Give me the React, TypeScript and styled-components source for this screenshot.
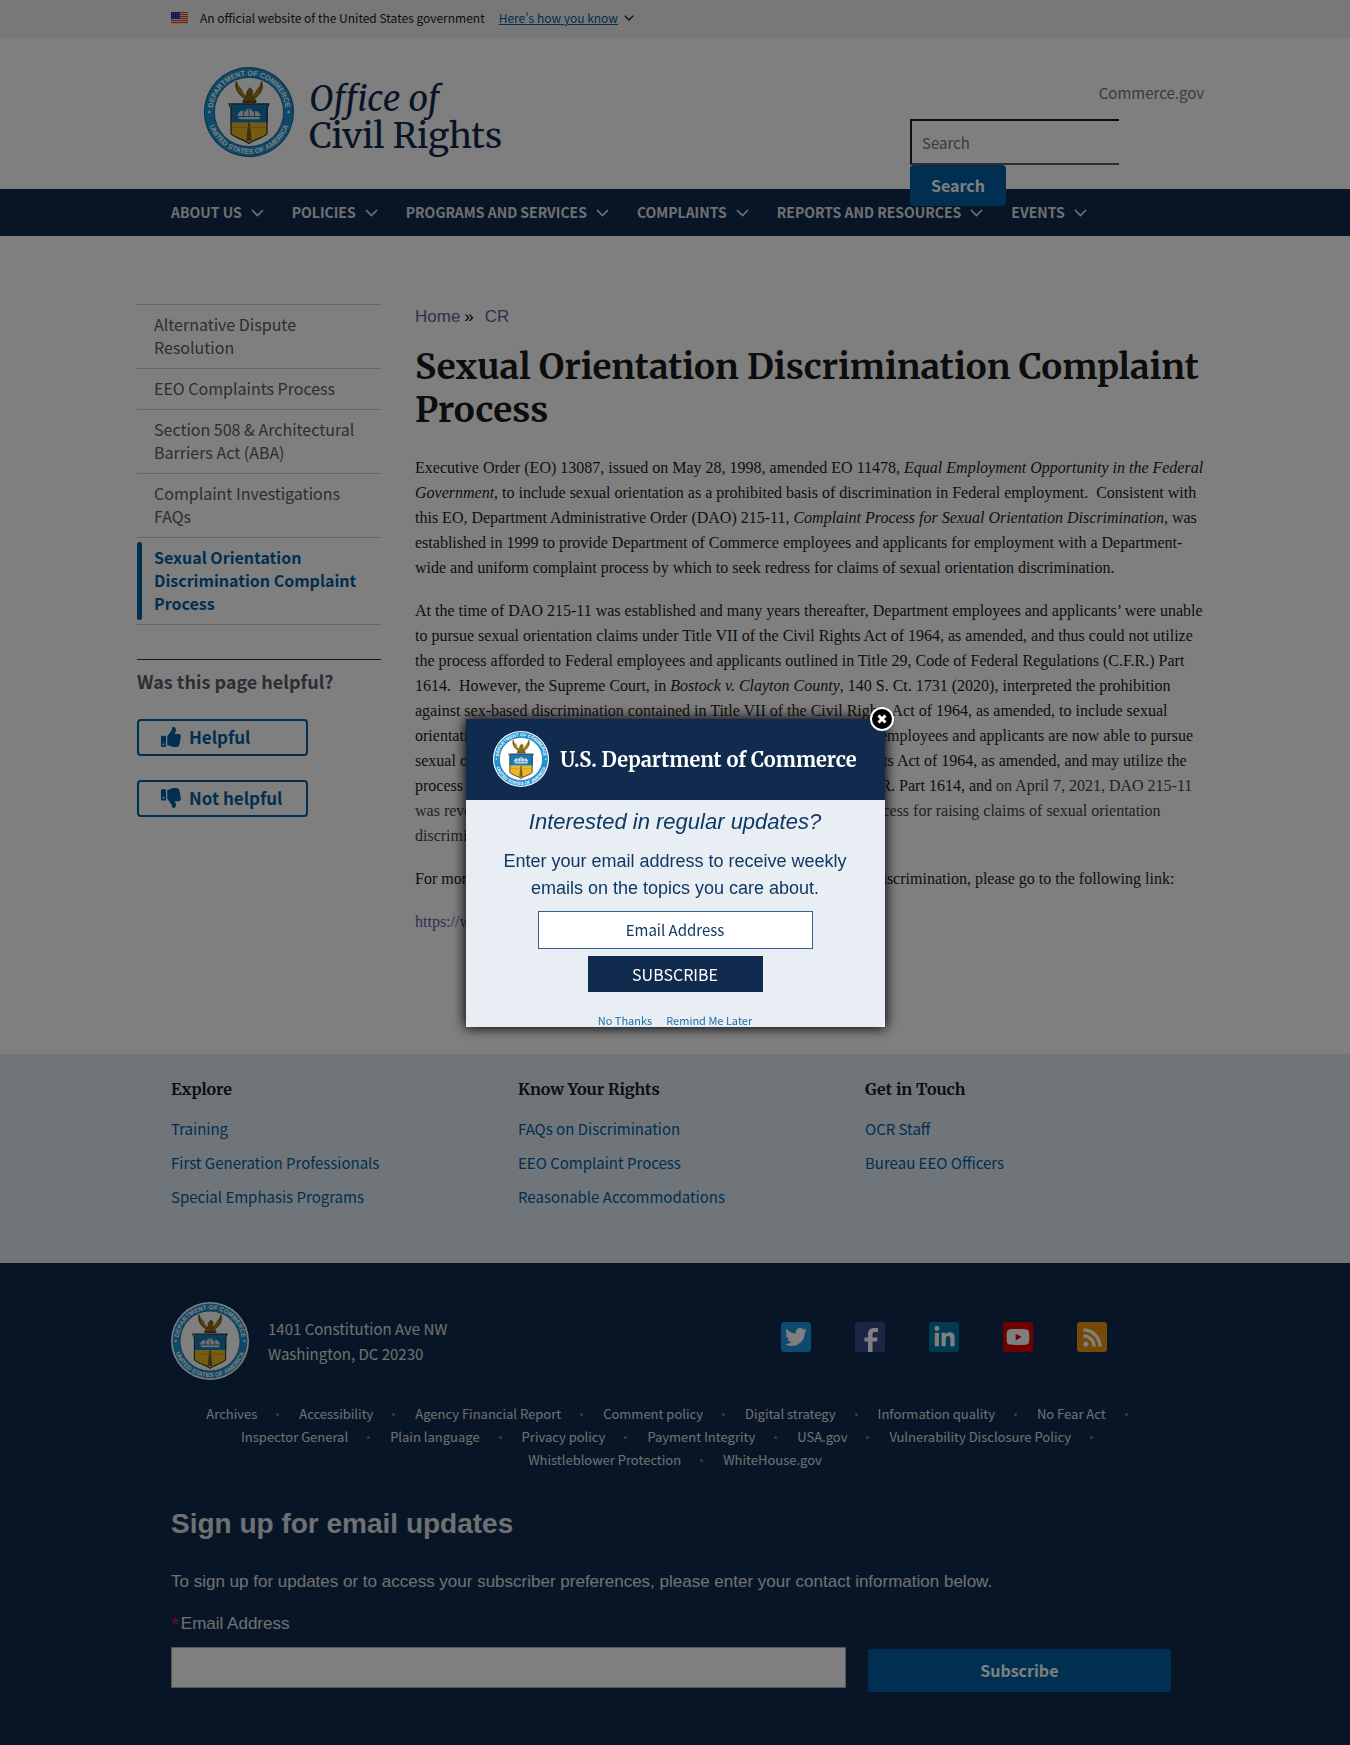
import React from "react";
import styled, { createGlobalStyle } from "styled-components";
import {
  FaThumbsUp,
  FaThumbsDown,
  FaTwitter,
  FaFacebookF,
  FaLinkedinIn,
  FaYoutube,
  FaRss,
} from "react-icons/fa";

const sans = `"Source Sans Pro", "Noto Sans CJK SC", sans-serif`;
const heading = `"Merriweather", "DejaVu Serif Condensed", "DejaVu Serif", serif`;
const arial = `"Liberation Sans", Arial, sans-serif`;
const times = `"Liberation Serif", "Times New Roman", serif`;

const color = {
  navy: "#112b4e",
  blue: "#005ea2",
  ink: "#1b1b1b",
  muted: "#71767a",
  line: "#c9cccf",
  visited: "#6a5a9c",
};

const GlobalStyle = createGlobalStyle`
  *, *::before, *::after { box-sizing: border-box; }
  body { margin: 0; background: #fff; color: ${color.ink}; font-family: ${sans}; }
  a { color: inherit; text-decoration: none; }
  ul { list-style: none; margin: 0; padding: 0; }
  h1, h2, h3, p { margin: 0; }
  button, input { font: inherit; margin: 0; }
`;

const Container = styled.div`
  width: 100%;
  max-width: 1008px;
  margin: 0 auto;
`;

const WideContainer = styled.div`
  width: 100%;
  max-width: 1076px;
  margin: 0 auto;
  padding-right: 9px;
`;

/* ---------- government banner ---------- */

const Banner = styled.div`
  background: #f0f0f0;
  font-size: 12px;
  line-height: 18px;
  padding: 9px 0 11px;
`;

const BannerRow = styled(Container)`
  display: flex;
  align-items: center;

  svg:first-child {
    margin-right: 12px;
  }
`;

const BannerToggle = styled.button`
  display: flex;
  align-items: center;
  gap: 6px;
  margin-left: 14px;
  padding: 0;
  border: 0;
  background: none;
  color: ${color.blue};
  line-height: 18px;

  span {
    text-decoration: underline;
    font-variant-east-asian: proportional-width;
  }

  svg {
    color: ${color.ink};
  }
`;

/* ---------- header ---------- */

const HeaderRow = styled(WideContainer)`
  display: flex;
  justify-content: space-between;
  align-items: flex-start;
  padding-left: 67px;
`;

const Brand = styled.a`
  display: flex;
  align-items: center;
  gap: 15px;
  padding: 29px 0 32px;
`;

const BrandName = styled.span`
  display: flex;
  flex-direction: column;
  padding-top: 12px;
  font-family: ${heading};
  font-size: 35px;
  line-height: 37px;
  color: ${color.navy};
`;

const HeaderTools = styled.div`
  display: flex;
  flex-direction: column;
  align-items: flex-end;
  width: 294px;
  padding-top: 44px;
`;

const SecondaryLink = styled.a`
  font-size: 15px;
  line-height: 22px;
  color: ${color.muted};
`;

const SearchForm = styled.form`
  display: flex;
  flex-direction: column;
  align-items: flex-start;
  align-self: stretch;
  margin: 15px 0 -20px;
`;

const SearchInput = styled.input`
  width: 209px;
  height: 46px;
  padding: 0 10px;
  border: 2px solid ${color.ink};
  border-right: 0;
  border-bottom-color: #565c65;
  border-radius: 0;
  background: #fff;
  font-size: 15px;

  &::placeholder {
    color: #757575;
    opacity: 1;
  }
`;

const PrimaryButton = styled.button`
  border: 0;
  border-radius: 4px;
  background: ${color.blue};
  color: #fff;
  font-weight: 700;
  font-size: 16px;
  line-height: 41px;
`;

const SearchButton = styled(PrimaryButton)`
  position: relative;
  z-index: 1;
  padding: 0 21px;
`;

/* ---------- main menu ---------- */

const Nav = styled.nav`
  background: ${color.navy};
`;

const NavList = styled.ul`
  display: flex;
  flex-wrap: wrap;
  gap: 0 28px;
  width: 100%;
  max-width: 1008px;
  margin: 0 auto;
`;

const NavButton = styled.button`
  display: flex;
  align-items: center;
  gap: 9px;
  padding: 0;
  border: 0;
  background: none;
  color: #dfe1e2;
  font-weight: 700;
  font-size: 14px;
  line-height: 47px;
  text-transform: uppercase;
`;

/* ---------- page body ---------- */

const Main = styled(WideContainer)`
  display: grid;
  grid-template-columns: 244px minmax(0, 1fr);
  gap: 34px;
  padding-top: 68px;
  padding-bottom: 120px;
`;

const SideList = styled.ul`
  border-bottom: 1px solid ${color.line};
`;

const SideItem = styled.li`
  border-top: 1px solid ${color.line};
`;

const SideLink = styled.a<{ $current?: boolean }>`
  position: relative;
  display: block;
  padding: 8px 17px 9px;
  font-size: 16px;
  line-height: 23px;
  font-weight: ${(p) => (p.$current ? 700 : 400)};
  color: ${(p) => (p.$current ? color.blue : "#565c65")};

  &::before {
    content: "";
    display: ${(p) => (p.$current ? "block" : "none")};
    position: absolute;
    left: 0;
    top: 4px;
    bottom: 4px;
    width: 5px;
    border-radius: 99px;
    background: ${color.blue};
  }
`;

const Feedback = styled.section`
  display: flex;
  flex-direction: column;
  align-items: flex-start;
  gap: 24px;
  margin-top: 34px;
  padding-top: 10px;
  border-top: 1px solid #333;
`;

const FeedbackTitle = styled.h2`
  padding-bottom: 2px;
  font-size: 18px;
  line-height: 23px;
  color: #565c65;
`;

const FeedbackButton = styled.button`
  display: flex;
  align-items: center;
  gap: 8px;
  width: 171px;
  height: 37px;
  padding: 0 22px 2px;
  border: 2px solid ${color.blue};
  border-radius: 4px;
  background: transparent;
  color: ${color.blue};
  font-weight: 700;
  font-size: 17px;
  line-height: 31px;
`;

const Breadcrumb = styled.ol`
  display: flex;
  list-style: none;
  margin: 0;
  padding: 0;
  font-family: ${arial};
  font-size: 17px;
  line-height: 25px;

  a {
    color: ${color.visited};
  }

  li + li::before {
    content: "»";
    margin: 0 11px 0 4px;
    color: #000;
  }
`;

const Title = styled.h1`
  margin: 17px 0 23px;
  font-family: ${heading};
  font-size: 35px;
  line-height: 43px;
  color: ${color.ink};
`;

const Prose = styled.div`
  display: flex;
  flex-direction: column;
  gap: 18px;
  font-family: ${times};
  font-size: 16px;
  line-height: 25px;
  color: ${color.ink};
`;

const Soft = styled.span`
  color: #444;
`;

const ProseLink = styled.a`
  color: ${color.visited};
`;

/* ---------- footer ---------- */

const LinkBand = styled.section`
  background: #e1eaf4;
  padding: 24px 0 49px;
`;

const Columns = styled(Container)`
  display: grid;
  grid-template-columns: repeat(2, 347px) 1fr;
`;

const ColumnTitle = styled.h3`
  margin-bottom: 12px;
  font-family: ${heading};
  font-size: 16px;
  line-height: 22px;
`;

const ColumnLink = styled.a`
  display: block;
  font-size: 15px;
  line-height: 34px;
  color: ${color.blue};
`;

const DarkFooter = styled.footer`
  background: ${color.navy};
  color: #dfe1e2;
  padding: 39px 0 54px;
`;

const ContactRow = styled(Container)`
  display: flex;
  align-items: center;
  gap: 19px;
`;

const Address = styled.address`
  flex: 1;
  font-style: normal;
  font-size: 15px;
  line-height: 25px;
`;

const SocialList = styled.ul`
  display: flex;
  gap: 44px;
  padding: 0 72px 8px 0;
`;

const SocialLink = styled.a<{ $bg: string }>`
  display: flex;
  align-items: center;
  justify-content: center;
  width: 30px;
  height: 30px;
  border-radius: 3px;
  background: ${(p) => p.$bg};
  color: #fff;
`;

const PolicyList = styled.ul`
  display: flex;
  flex-wrap: wrap;
  justify-content: center;
  column-gap: 4px;
  width: 100%;
  max-width: 1008px;
  margin: 22px auto 0;
  font-size: 13px;
  line-height: 23px;

  li {
    display: flex;
    align-items: center;
  }

  li:not(:last-child)::after {
    content: "";
    width: 3px;
    height: 3px;
    margin: 2px 16px 0 19px;
    border-radius: 50%;
    background: #5b7f95;
  }
`;

const SignUp = styled(Container)`
  margin-top: 36px;
  font-family: ${arial};
  font-size: 17px;
  line-height: 24px;
`;

const SignUpTitle = styled.h2`
  margin-bottom: 29px;
  font-size: 28px;
  line-height: 34px;
`;

const EmailLabel = styled.label`
  display: flex;
  gap: 2px;
  margin: 18px 0 11px;

  span {
    font-size: 20px;
    color: #e0104a;
  }
`;

const SignUpRow = styled.form`
  display: grid;
  grid-template-columns: minmax(0, 674fr) minmax(0, 303fr);
  gap: 22px;
  align-items: start;
  padding-right: 8px;
`;

const EmailInput = styled.input`
  width: 100%;
  height: 41px;
  padding: 0 8px;
  border: 1px solid #a9aeb1;
  background: #fff;
`;

const SubscribeButton = styled(PrimaryButton)`
  margin-top: 2px;
  border-radius: 2px;
  font-family: ${sans};
`;

/* ---------- dialog ---------- */

const Backdrop = styled.div`
  position: fixed;
  inset: 0;
  z-index: 10;
  display: flex;
  align-items: center;
  justify-content: center;
  background: rgba(0, 0, 0, 0.5);
`;

const Dialog = styled.div`
  position: relative;
  width: 419px;
  max-width: 100%;
  background: #e9eef5;
  color: ${color.navy};
  box-shadow: 0 0 12px 1px #000;
`;

const DialogHeader = styled.header`
  display: flex;
  align-items: center;
  justify-content: center;
  gap: 11px;
  height: 81px;
  background: ${color.navy};
  color: #fff;
  font-family: ${heading};
  font-weight: 700;
  font-size: 20px;
  white-space: nowrap;
`;

const CloseButton = styled.button`
  position: absolute;
  top: -12px;
  right: -9px;
  display: flex;
  padding: 0;
  border: 0;
  border-radius: 50%;
  background: none;
`;

const DialogBody = styled.form`
  display: flex;
  flex-direction: column;
  align-items: center;
  padding-top: 8px;
  text-align: center;
  font-family: ${arial};
`;

const DialogTitle = styled.h2`
  font-size: 22px;
  font-style: italic;
  font-weight: 400;
  line-height: 27px;
  color: #0f3864;
`;

const DialogText = styled.p`
  width: 360px;
  margin: 13px 0 9px;
  font-size: 18px;
  line-height: 27px;
  color: #0f3864;
`;

const DialogInput = styled.input`
  width: 275px;
  height: 38px;
  border: 1px solid #33608f;
  background: #fff;
  font-family: ${sans};
  font-size: 15px;
  text-align: center;

  &::placeholder {
    color: #0f3864;
    opacity: 1;
  }
`;

const DialogSubmit = styled.button`
  width: 175px;
  height: 36px;
  margin: 7px 0 21px;
  padding: 0;
  border: 0;
  background: ${color.navy};
  color: #fff;
  font-family: ${sans};
  font-size: 16px;
`;

const DialogLinks = styled.div`
  display: flex;
  gap: 14px;
  font-family: ${sans};
  font-size: 11px;
  line-height: 14px;
  color: #1f6ea5;
`;

/* ---------- drawings ---------- */

function Seal({ size, id, ring }: { size: number; id: string; ring?: boolean }) {
  return (
    <svg width={size} height={size} viewBox="0 0 100 100" role="img" aria-label="Department of Commerce seal">
      <defs>
        <path id={`${id}-top`} d="M 9.5 50 A 40.5 40.5 0 0 1 90.5 50" />
        <path id={`${id}-bottom`} d="M 3.5 50 A 46.5 46.5 0 0 0 96.5 50" />
      </defs>
      <circle cx="50" cy="50" r="50" fill={ring ? "#fff" : "#0a5f95"} />
      <circle cx="50" cy="50" r={ring ? 48 : 49} fill="#1e93d2" />
      <circle cx="50" cy="50" r="38.5" fill="#fff" stroke="#0a5f95" strokeWidth="1" />
      <g fill="#fff" fontFamily="Liberation Sans, Arial, sans-serif" fontSize="8" fontWeight="700" textAnchor="middle">
        <text>
          <textPath href={`#${id}-top`} startOffset="50%">DEPARTMENT OF COMMERCE</textPath>
        </text>
        <text>
          <textPath href={`#${id}-bottom`} startOffset="50%">UNITED STATES OF AMERICA</textPath>
        </text>
      </g>
      <circle cx="6" cy="50" r="1.4" fill="#fff" />
      <circle cx="94" cy="50" r="1.4" fill="#fff" />
      {/* eagle */}
      <path
        d="M36 16 C37 20 39 22 41 24 L43 29 L47 33 L48 27 L51 23 L54 26 L53 33 L57 29 L60 24 C62 22 63 19 64 16 C67 24 62 31 56 35 L58 38 L43 38 L45 35 C39 31 33 24 36 16 Z"
        fill="#8d6a14"
        stroke="#4a3a10"
        strokeWidth="0.8"
      />
      <path d="M38 21 L46 32 M62 21 L54 32 M38 25 L45 33 M62 25 L56 33" stroke="#d9a52e" strokeWidth="1.1" fill="none" />
      <path d="M43 39 H58" stroke="#7c2f1c" strokeWidth="2" />
      {/* shield */}
      <path d="M30 41 H71 V62 H30 Z" fill="#157bb0" />
      <path d="M30 62 H70 V74 C66 79 56 80 50 85 C44 80 34 79 30 74 Z" fill="#edb723" />
      <path d="M28 41 H72 L70 46 V74 C66 79 56 80 50 85 C44 80 34 79 30 74 V46 Z" fill="none" stroke="#2b2f35" strokeWidth="1.4" />
      <path d="M37 55 C38 49 43 47 46 50 C49 44 53 46 54 50 C58 47 62 50 63 55 L61 58 H40 Z" fill="#cfe3ee" />
      <path d="M37 55 H64 M44 49 V55 M50 46 V55 M56 49 V55" stroke="#39586b" strokeWidth="1" />
      <path d="M49 62 H51 L53 82 H47 Z" fill="#75611a" />
      <path d="M32 67 H68" stroke="#c08e12" strokeWidth="0.8" />
    </svg>
  );
}

function Flag() {
  return (
    <svg width="17" height="12" viewBox="0 0 17 12" role="img" aria-label="U.S. flag">
      <rect width="17" height="12" fill="#fff" />
      {[0, 2, 4, 6, 8, 10].map((y) => (
        <rect key={y} y={y} width="17" height="1.2" fill="#db3e1f" />
      ))}
      <rect width="9" height="7" fill="#1e33b1" />
      <path d="M1 1.5H8M1 3.5H8M1 5.5H8" stroke="#8f9be0" strokeWidth="0.6" strokeDasharray="1 1" />
    </svg>
  );
}

function Chevron({ width = 13 }: { width?: number }) {
  return (
    <svg width={width} height={(width * 8) / 13} viewBox="0 0 13 8" fill="none" aria-hidden="true">
      <path d="M1 1 L6.5 6.5 L12 1" stroke="currentColor" strokeWidth="1.7" />
    </svg>
  );
}

function CloseIcon() {
  return (
    <svg width="24" height="24" viewBox="0 0 24 24" aria-hidden="true">
      <circle cx="12" cy="12" r="11" fill="#000" stroke="#fff" strokeWidth="2" />
      <path d="M8.5 8.5 L15.5 15.5 M15.5 8.5 L8.5 15.5" stroke="#fff" strokeWidth="3" />
    </svg>
  );
}

function FacebookIcon() {
  return (
    <svg width="30" height="30" viewBox="0 0 30 30" aria-hidden="true">
      <path
        d="M13 30 V19.5 H9.5 V15.5 H13 V12 C13 8 15.3 6 19 6 H23 V10 H20 C18 10 17.5 11 17.5 12.5 V15.5 H22.7 L22 19.5 H17.5 V30 Z"
        fill="#fff"
      />
    </svg>
  );
}

/* ---------- data ---------- */

const menu = ["About us", "Policies", "Programs and services", "Complaints", "Reports and resources", "Events"];

const sideLinks = [
  "Alternative Dispute Resolution",
  "EEO Complaints Process",
  "Section 508 & Architectural Barriers Act (ABA)",
  "Complaint Investigations FAQs",
  "Sexual Orientation Discrimination Complaint Process",
];

const columns = [
  { title: "Explore", links: ["Training", "First Generation Professionals", "Special Emphasis Programs"] },
  { title: "Know Your Rights", links: ["FAQs on Discrimination", "EEO Complaint Process", "Reasonable Accommodations"] },
  { title: "Get in Touch", links: ["OCR Staff", "Bureau EEO Officers"] },
];

const social = [
  { name: "Twitter", bg: "#1b95e0", icon: <FaTwitter size={22} /> },
  { name: "Facebook", bg: "#3b4a8c", icon: <FacebookIcon /> },
  { name: "LinkedIn", bg: "#0077a5", icon: <FaLinkedinIn size={23} /> },
  { name: "YouTube", bg: "#e00000", icon: <FaYoutube size={24} /> },
  { name: "RSS", bg: "#e8950c", icon: <FaRss size={21} /> },
];

const policies = [
  "Archives",
  "Accessibility",
  "Agency Financial Report",
  "Comment policy",
  "Digital strategy",
  "Information quality",
  "No Fear Act",
  "Inspector General",
  "Plain language",
  "Privacy policy",
  "Payment Integrity",
  "USA.gov",
  "Vulnerability Disclosure Policy",
  "Whistleblower Protection",
  "WhiteHouse.gov",
];

export default function App() {
  return (
    <>
      <GlobalStyle />
      <Banner>
        <BannerRow>
          <Flag />
          <span>An official website of the United States government</span>
          <BannerToggle type="button">
            <span>Here’s how you know</span>
            <Chevron width={10} />
          </BannerToggle>
        </BannerRow>
      </Banner>

      <header>
        <HeaderRow>
          <Brand href="#">
            <Seal size={90} id="seal-header" />
            <BrandName>
              <em>Office of</em>
              <span>Civil Rights</span>
            </BrandName>
          </Brand>
          <HeaderTools>
            <SecondaryLink href="#">Commerce.gov</SecondaryLink>
            <SearchForm>
              <SearchInput type="text" placeholder="Search" aria-label="Search" />
              <SearchButton type="button">Search</SearchButton>
            </SearchForm>
          </HeaderTools>
        </HeaderRow>
        <Nav>
          <NavList>
            {menu.map((item) => (
              <li key={item}>
                <NavButton type="button">
                  {item}
                  <Chevron />
                </NavButton>
              </li>
            ))}
          </NavList>
        </Nav>
      </header>

      <Main as="main">
        <aside>
          <SideList>
            {sideLinks.map((item, i) => (
              <SideItem key={item}>
                <SideLink href="#" $current={i === sideLinks.length - 1}>
                  {item}
                </SideLink>
              </SideItem>
            ))}
          </SideList>
          <Feedback>
            <FeedbackTitle>Was this page helpful?</FeedbackTitle>
            <FeedbackButton type="button">
              <FaThumbsUp size={20} />
              Helpful
            </FeedbackButton>
            <FeedbackButton type="button">
              <FaThumbsDown size={20} />
              Not helpful
            </FeedbackButton>
          </Feedback>
        </aside>

        <article>
          <Breadcrumb>
            <li>
              <a href="#">Home</a>
            </li>
            <li>
              <a href="#">CR</a>
            </li>
          </Breadcrumb>
          <Title>Sexual Orientation Discrimination Complaint Process</Title>
          <Prose>
            <p>
              Executive Order (EO) 13087, issued on May 28, 1998, amended EO 11478,{" "}
              <em>Equal Employment Opportunity in the Federal Government</em>, to include sexual orientation as a
              prohibited basis of discrimination in Federal employment.&nbsp; Consistent with this EO, Department
              Administrative Order (DAO) 215-11, <em>Complaint Process for Sexual Orientation Discrimination</em>, was
              established in 1999 to provide Department of Commerce employees and applicants for employment with a
              Department-wide and uniform complaint process by which to seek redress for claims of sexual orientation
              discrimination.
            </p>
            <p>
              At the time of DAO 215-11 was established and many years thereafter, Department employees and applicants’
              were unable to pursue sexual orientation claims under Title VII of the Civil Rights Act of 1964, as
              amended, and thus could not utilize the process afforded to Federal employees and applicants outlined in
              Title 29, Code of Federal Regulations (C.F.R.) Part 1614.&nbsp; However, the Supreme Court, in{" "}
              <em>Bostock v. Clayton County</em>, 140 S. Ct. 1731 (2020), interpreted the prohibition against sex-based
              discrimination contained in Title VII of the Civil Rights Act of 1964, as amended, to include sexual
              orientation and gender identity.&nbsp; Accordingly, Department of Commerce employees and applicants are now able to
              pursue sexual orientation discrimination claims under Title VII of the Civil Rights Act of 1964, as
              amended, and may utilize the process afforded to Federal employees and applicants from Title 29, C.F.R. Part
              1614, and <Soft>on April 7, 2021, DAO 215-11 was revoked, as it is no longer needed to supply a separate
              complaint process for raising claims of sexual orientation discrimination.</Soft>
            </p>
            <p>
              For more information on how to raise a complaint of sexual orientation discrimination, please go to the
              following link:
            </p>
            <p>
              <ProseLink href="#">https://www.commerce.gov/cr/programs-and-services</ProseLink>
            </p>
          </Prose>
        </article>
      </Main>

      <LinkBand>
        <Columns>
          {columns.map((column) => (
            <nav key={column.title} aria-label={column.title}>
              <ColumnTitle>{column.title}</ColumnTitle>
              {column.links.map((link) => (
                <ColumnLink key={link} href="#">
                  {link}
                </ColumnLink>
              ))}
            </nav>
          ))}
        </Columns>
      </LinkBand>

      <DarkFooter>
        <ContactRow>
          <Seal size={78} id="seal-footer" ring />
          <Address>
            1401 Constitution Ave NW
            <br />
            Washington, DC 20230
          </Address>
          <SocialList>
            {social.map((item) => (
              <li key={item.name}>
                <SocialLink href="#" $bg={item.bg} aria-label={item.name}>
                  {item.icon}
                </SocialLink>
              </li>
            ))}
          </SocialList>
        </ContactRow>
        <PolicyList>
          {policies.map((item) => (
            <li key={item}>
              <a href="#">{item}</a>
            </li>
          ))}
        </PolicyList>
        <SignUp>
          <SignUpTitle>Sign up for email updates</SignUpTitle>
          <p>
            To sign up for updates or to access your subscriber preferences, please enter your contact information
            below.
          </p>
          <EmailLabel htmlFor="signup-email">
            <span>*</span>Email Address
          </EmailLabel>
          <SignUpRow>
            <EmailInput id="signup-email" type="email" />
            <SubscribeButton type="button">Subscribe</SubscribeButton>
          </SignUpRow>
        </SignUp>
      </DarkFooter>

      <Backdrop>
        <Dialog role="dialog" aria-modal="true" aria-labelledby="dialog-title">
          <DialogHeader>
            <Seal size={56} id="seal-dialog" ring />
            U.S. Department of Commerce
          </DialogHeader>
          <DialogBody>
            <DialogTitle id="dialog-title">Interested in regular updates?</DialogTitle>
            <DialogText>Enter your email address to receive weekly emails on the topics you care about.</DialogText>
            <DialogInput type="email" placeholder="Email Address" aria-label="Email Address" />
            <DialogSubmit type="button">SUBSCRIBE</DialogSubmit>
            <DialogLinks>
              <a href="#">No Thanks</a>
              <a href="#">Remind Me Later</a>
            </DialogLinks>
          </DialogBody>
          <CloseButton type="button" aria-label="Close">
            <CloseIcon />
          </CloseButton>
        </Dialog>
      </Backdrop>
    </>
  );
}
